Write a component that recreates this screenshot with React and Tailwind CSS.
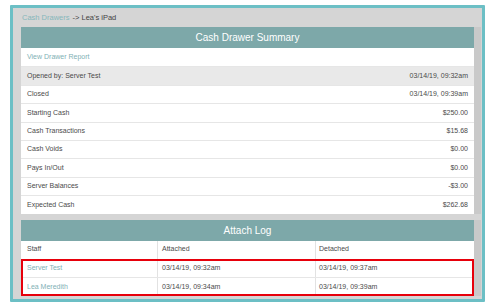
import React from "react";

const summaryRows = [
  { label: "Opened by: Server Test", value: "03/14/19, 09:32am", shaded: true },
  { label: "Closed", value: "03/14/19, 09:39am" },
  { label: "Starting Cash", value: "$250.00" },
  { label: "Cash Transactions", value: "$15.68" },
  { label: "Cash Voids", value: "$0.00" },
  { label: "Pays In/Out", value: "$0.00" },
  { label: "Server Balances", value: "-$3.00" },
  { label: "Expected Cash", value: "$262.68" },
];

const attachRows = [
  { staff: "Server Test", attached: "03/14/19, 09:32am", detached: "03/14/19, 09:37am" },
  { staff: "Lea Meredith", attached: "03/14/19, 09:34am", detached: "03/14/19, 09:39am" },
];

function PanelHeader({ title }) {
  return (
    <div className="h-[21px] bg-[#7da8a9] flex items-center justify-center text-white text-[10px]">
      {title}
    </div>
  );
}

export default function App() {
  return (
    <div className="w-[490px] h-[306px] bg-white pl-[10px] pt-[5px] text-[#4a4a4a] font-['Liberation_Sans',Arial,sans-serif]">
      <div className="w-[475px] h-[297px] border-[3px] border-[#6cbfc5] bg-[#d5d5d5] pl-[8px] pr-[8px] rounded-[1px]">
        {/* breadcrumb */}
        <div className="h-[19px] flex items-center text-[7.5px] pl-[1px]">
          <span className="text-[#86b7bb]">Cash Drawers</span>
          <span className="ml-[3px] text-[#444]">-&gt; Lea's iPad</span>
        </div>

        {/* Cash Drawer Summary */}
        <div className="bg-white shadow-[7px_0_0_0_#c9c9c9]">
          <PanelHeader title="Cash Drawer Summary" />
          <div className="h-[18.4px] flex items-center px-[6px] text-[7px] text-[#7fb1b5]">
            View Drawer Report
          </div>
          {summaryRows.map((row) => (
            <div
              key={row.label}
              className={
                "h-[18.4px] flex items-center justify-between px-[6px] text-[7px] border-t border-[#e6e6e6] " +
                (row.shaded ? "bg-[#e9e9e9]" : "bg-white")
              }
            >
              <span>{row.label}</span>
              <span>{row.value}</span>
            </div>
          ))}
        </div>

        {/* Attach Log */}
        <div className="mt-[6px] bg-white shadow-[7px_0_0_0_#c9c9c9]">
          <PanelHeader title="Attach Log" />
          <div className="grid grid-cols-[136px_158px_1fr] h-[18.4px] text-[7px]">
            <div className="flex items-center pl-[6px]">Staff</div>
            <div className="flex items-center pl-[4px] border-l border-[#e2e2e2]">Attached</div>
            <div className="flex items-center pl-[3px] border-l border-[#e2e2e2]">Detached</div>
          </div>
          <div className="relative">
            {attachRows.map((row) => (
              <div
                key={row.staff}
                className="grid grid-cols-[136px_158px_1fr] h-[18.4px] text-[7px] border-t border-[#e6e6e6]"
              >
                <div className="flex items-center pl-[6px] text-[#7fb1b5]">{row.staff}</div>
                <div className="flex items-center pl-[4px] border-l border-[#e2e2e2]">{row.attached}</div>
                <div className="flex items-center pl-[3px] border-l border-[#e2e2e2]">{row.detached}</div>
              </div>
            ))}
            {/* highlight box */}
            <div className="absolute inset-0 outline-2 outline-offset-[-2px] outline-red-600 pointer-events-none"></div>
          </div>
        </div>
      </div>
    </div>
  );
}
